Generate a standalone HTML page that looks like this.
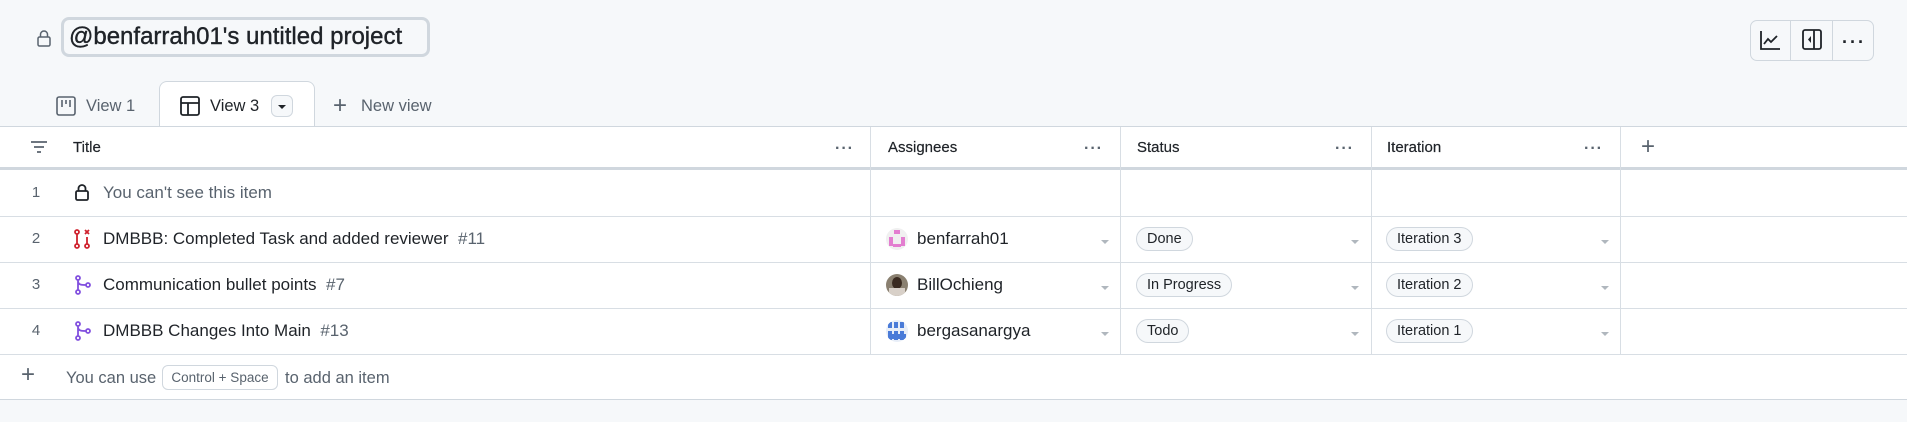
<!DOCTYPE html>
<html><head><meta charset="utf-8"><style>
*{box-sizing:border-box;margin:0;padding:0}
body{width:1907px;height:422px;background:#f6f8fa;font-family:"Liberation Sans",sans-serif;color:#1f2328;position:relative;overflow:hidden}
.abs{position:absolute}
.title{left:61px;top:17px;width:369px;height:40px;border:3px solid #d0d7de;border-radius:8px;font-size:24px;line-height:34px;padding-left:5px;color:#1f2328;background:#f6f8fa;white-space:nowrap;-webkit-text-stroke:0.4px #1f2328}
.tab{font-size:16.5px;color:#59636e;line-height:20px}
.activetab{left:159px;top:81px;width:156px;height:46px;background:#fff;border:1px solid #d0d7de;border-bottom:none;border-radius:8px 8px 0 0}
.table{left:0;top:126px;width:1907px;height:274px;background:#fff;border-top:1px solid #d0d7de;border-bottom:1px solid #d0d7de}
.hline{position:absolute;left:0;width:1907px;height:1px;background:#d8dee4}
.vline{position:absolute;width:1px;background:#d8dee4;top:0;height:228px}
.t{position:absolute;font-size:17px;line-height:20px;white-space:nowrap}
.h{position:absolute;font-size:15px;color:#1f2328;line-height:18px;-webkit-text-stroke:0.2px #1f2328}
.dots{position:absolute;font-size:16px;letter-spacing:1px;color:#59636e;font-weight:bold;line-height:10px}
.num{position:absolute;width:72px;text-align:center;color:#59636e;font-size:15px;line-height:20px}
.pill{position:absolute;height:24px;border:1px solid #d0d7de;border-radius:12px;background:#f6f8fa;font-size:14.5px;line-height:22px;padding:0 10px;color:#1f2328}
.caret{position:absolute;width:0;height:0;border-left:4px solid transparent;border-right:4px solid transparent;border-top:4px solid #b0b7be}
.av{position:absolute;width:22px;height:22px;border-radius:50%;overflow:hidden}
</style></head><body>
<svg class="abs" style="left:36px;top:29px" width="16" height="18" viewBox="0 0 16 18"><rect x="2" y="8" width="12" height="9" rx="1.5" fill="none" stroke="#59636e" stroke-width="1.5"/><path d="M4.5 8V5.5a3.5 3.5 0 0 1 7 0V8" fill="none" stroke="#59636e" stroke-width="1.5"/></svg>
<div class="abs title">@benfarrah01's untitled project</div>

<div class="abs" style="left:1750px;top:20px;width:124px;height:41px;border:1px solid #d0d7de;border-radius:7px;background:#f6f8fa"></div>
<div class="abs" style="left:1790px;top:20px;width:1px;height:41px;background:#d0d7de"></div>
<div class="abs" style="left:1832px;top:20px;width:1px;height:41px;background:#d0d7de"></div>
<svg class="abs" style="left:1760px;top:30px" width="20" height="20" viewBox="0 0 20 20"><path d="M1 1v18h19" fill="none" stroke="#1f2328" stroke-width="1.8"/><path d="M4 14l4-5 3 3 6-6" fill="none" stroke="#1f2328" stroke-width="1.8"/></svg>
<svg class="abs" style="left:1802px;top:29px" width="20" height="22" viewBox="0 0 20 22"><rect x="1" y="1" width="18" height="19" rx="2" fill="none" stroke="#1f2328" stroke-width="1.8"/><path d="M12 1v19" stroke="#1f2328" stroke-width="1.8"/><path d="M9 7l-3 3.5 3 3.5z" fill="#1f2328"/></svg>
<div class="abs" style="left:1842px;top:32px;font-size:18px;font-weight:bold;letter-spacing:2px;color:#1f2328">···</div>

<svg class="abs" style="left:56px;top:96px" width="20" height="20" viewBox="0 0 20 20"><rect x="1" y="1" width="18" height="18" rx="2" fill="none" stroke="#59636e" stroke-width="1.6"/><path d="M6 4v7M10 4v4M14 4v7" stroke="#59636e" stroke-width="1.6"/></svg>
<div class="abs tab" style="left:86px;top:96px">View 1</div>
<div class="abs activetab"></div>
<svg class="abs" style="left:180px;top:96px" width="20" height="20" viewBox="0 0 20 20"><rect x="1" y="1" width="18" height="18" rx="2" fill="none" stroke="#1f2328" stroke-width="1.8"/><path d="M1 7h18M8 7v12" stroke="#1f2328" stroke-width="1.8"/></svg>
<div class="abs tab" style="left:210px;top:96px;color:#1f2328">View 3</div>
<div class="abs" style="left:271px;top:95px;width:22px;height:22px;border:1px solid #d0d7de;border-radius:6px;background:#f6f8fa"></div>
<div class="caret" style="left:278px;top:105px;border-top-color:#1f2328"></div>
<div class="abs" style="left:333px;top:92px;font-size:24px;color:#59636e">+</div>
<div class="abs tab" style="left:361px;top:96px">New view</div>

<div class="abs table">
  <div class="hline" style="top:40px;height:3px;background:#d0d7de"></div>
  <div class="hline" style="top:89px"></div>
  <div class="hline" style="top:135px"></div>
  <div class="hline" style="top:181px"></div>
  <div class="hline" style="top:227px"></div>
  <div class="vline" style="left:870px"></div>
  <div class="vline" style="left:1120px"></div>
  <div class="vline" style="left:1371px"></div>
  <div class="vline" style="left:1620px"></div>

  <svg class="abs" style="left:30px;top:13px" width="18" height="14" viewBox="0 0 18 14"><path d="M1 2h16M4 7h10M7 12h4" stroke="#59636e" stroke-width="1.8"/></svg>
  <div class="h" style="left:73px;top:12px">Title</div>
  <div class="dots" style="left:835px;top:17px">···</div>
  <div class="h" style="left:888px;top:12px">Assignees</div>
  <div class="dots" style="left:1084px;top:17px">···</div>
  <div class="h" style="left:1137px;top:12px">Status</div>
  <div class="dots" style="left:1335px;top:17px">···</div>
  <div class="h" style="left:1387px;top:12px">Iteration</div>
  <div class="dots" style="left:1584px;top:17px">···</div>
  <div class="abs" style="left:1641px;top:6px;font-size:24px;color:#59636e">+</div>

  <div class="num" style="top:56px">1</div>
  <svg class="abs" style="left:74px;top:56px" width="16" height="19" viewBox="0 0 16 19"><rect x="2" y="8" width="12" height="9" rx="1.5" fill="none" stroke="#1f2328" stroke-width="1.8"/><path d="M4.5 8V5.5a3.5 3.5 0 0 1 7 0V8" fill="none" stroke="#1f2328" stroke-width="1.8"/></svg>
  <div class="t" style="left:103px;top:56px;color:#59636e">You can't see this item</div>

  <div class="num" style="top:102px">2</div>
  <svg class="abs" style="left:73px;top:102px" width="18" height="20" viewBox="0 0 18 20"><g fill="none" stroke="#cf222e" stroke-width="1.8"><circle cx="4" cy="3" r="2"/><circle cx="4" cy="17" r="2"/><path d="M4 5v10"/><circle cx="14" cy="17" r="2"/><path d="M14 8v7M12 1l4 4M16 1l-4 4"/></g></svg>
  <div class="t" style="left:103px;top:102px">DMBBB: Completed Task and added reviewer&nbsp; <span style="color:#59636e">#11</span></div>

  <div class="num" style="top:148px">3</div>
  <svg class="abs" style="left:74px;top:148px" width="18" height="20" viewBox="0 0 18 20"><g fill="none" stroke="#8250df" stroke-width="1.8"><circle cx="4" cy="3" r="2"/><circle cx="4" cy="17" r="2"/><path d="M4 5v10M4 6c0 4 4 4 8 4"/><circle cx="14" cy="10" r="2"/></g></svg>
  <div class="t" style="left:103px;top:148px">Communication bullet points&nbsp; <span style="color:#59636e">#7</span></div>

  <div class="num" style="top:194px">4</div>
  <svg class="abs" style="left:74px;top:194px" width="18" height="20" viewBox="0 0 18 20"><g fill="none" stroke="#8250df" stroke-width="1.8"><circle cx="4" cy="3" r="2"/><circle cx="4" cy="17" r="2"/><path d="M4 5v10M4 6c0 4 4 4 8 4"/><circle cx="14" cy="10" r="2"/></g></svg>
  <div class="t" style="left:103px;top:194px">DMBBB Changes Into Main&nbsp; <span style="color:#59636e">#13</span></div>

  <div class="av" style="left:886px;top:101px;background:#f0f0f0"><div class="abs" style="left:8px;top:2px;width:6px;height:4px;background:#e37ed0"></div><div class="abs" style="left:3px;top:9px;width:4px;height:9px;background:#e37ed0"></div><div class="abs" style="left:15px;top:9px;width:4px;height:9px;background:#e37ed0"></div><div class="abs" style="left:7px;top:16px;width:8px;height:3px;background:#e37ed0"></div></div>
  <div class="t" style="left:917px;top:102px">benfarrah01</div>
  <div class="av" style="left:886px;top:147px;background:#8a8070"><div class="abs" style="left:6px;top:3px;width:10px;height:12px;border-radius:50%;background:#3a2a20"></div><div class="abs" style="left:3px;top:14px;width:16px;height:9px;background:#d8d0c8"></div></div>
  <div class="t" style="left:917px;top:148px">BillOchieng</div>
  <div class="av" style="left:886px;top:193px;background:#e8eef8"><div class="abs" style="left:2px;top:2px;width:18px;height:18px;background:repeating-linear-gradient(90deg,#4a7bd8 0 4px,#e8eef8 4px 6px)"></div><div class="abs" style="left:0;top:8px;width:22px;height:3px;background:#e8eef8"></div><div class="abs" style="left:2px;top:14px;width:18px;height:5px;background:#4a7bd8"></div></div>
  <div class="t" style="left:917px;top:194px">bergasanargya</div>

  <div class="caret" style="left:1101px;top:113px"></div>
  <div class="caret" style="left:1101px;top:159px"></div>
  <div class="caret" style="left:1101px;top:205px"></div>
  <div class="caret" style="left:1351px;top:113px"></div>
  <div class="caret" style="left:1351px;top:159px"></div>
  <div class="caret" style="left:1351px;top:205px"></div>
  <div class="caret" style="left:1601px;top:113px"></div>
  <div class="caret" style="left:1601px;top:159px"></div>
  <div class="caret" style="left:1601px;top:205px"></div>

  <div class="pill" style="left:1136px;top:100px">Done</div>
  <div class="pill" style="left:1136px;top:146px">In Progress</div>
  <div class="pill" style="left:1136px;top:192px">Todo</div>
  <div class="pill" style="left:1386px;top:100px">Iteration 3</div>
  <div class="pill" style="left:1386px;top:146px">Iteration 2</div>
  <div class="pill" style="left:1386px;top:192px">Iteration 1</div>

  <div class="abs" style="left:21px;top:234px;font-size:24px;color:#59636e">+</div>
  <div class="t" style="left:66px;top:241px;color:#59636e;font-size:16.5px">You can use</div>
  <div class="abs" style="left:162px;top:238px;width:116px;height:25px;border:1px solid #d0d7de;border-radius:6px;font-size:13.5px;line-height:23px;text-align:center;color:#59636e;background:#fff">Control + Space</div>
  <div class="t" style="left:285px;top:241px;color:#59636e;font-size:16.5px">to add an item</div>
</div>
</body></html>
